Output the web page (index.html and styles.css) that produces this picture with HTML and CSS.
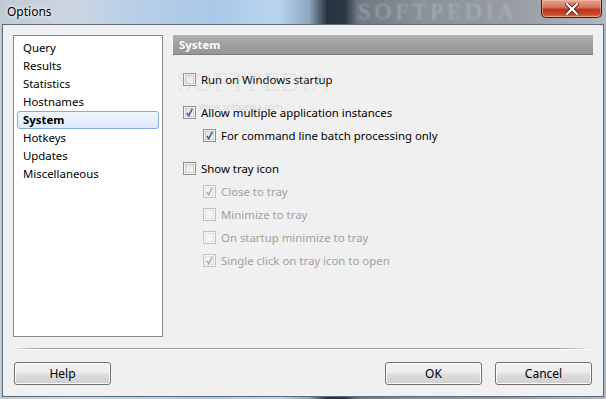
FILE: index.html
```html
<!DOCTYPE html>
<html>
<head>
<meta charset="utf-8">
<title>Options</title>
<link rel="stylesheet" href="styles.css">
</head>
<body>
<div class="window">
  <div class="titlebar">
    <span class="title">Options</span>
    <span class="brand">SOFTPEDIA</span>
    <button class="close" aria-label="Close">
      <svg width="14" height="12" viewBox="0 0 14 12"><path d="M2 1 L12 11 M12 1 L2 11" stroke="#5a1a10" stroke-width="4" stroke-linecap="square"/><path d="M2 1 L12 11 M12 1 L2 11" stroke="#fff" stroke-width="2.2" stroke-linecap="square"/></svg>
    </button>
  </div>
  <div class="client">
    <div class="main">
      <ul class="nav">
        <li class="nav-item">Query</li>
        <li class="nav-item">Results</li>
        <li class="nav-item">Statistics</li>
        <li class="nav-item">Hostnames</li>
        <li class="nav-item selected">System</li>
        <li class="nav-item">Hotkeys</li>
        <li class="nav-item">Updates</li>
        <li class="nav-item">Miscellaneous</li>
      </ul>
      <div class="panel">
        <div class="panel-head">System</div>
        <div class="group first">
          <label class="opt"><span class="cb"></span>Run on Windows startup</label>
        </div>
        <div class="group">
          <label class="opt"><span class="cb checked"></span>Allow multiple application instances</label>
          <label class="opt sub"><span class="cb checked"></span>For command line batch processing only</label>
        </div>
        <div class="group">
          <label class="opt"><span class="cb"></span>Show tray icon</label>
          <label class="opt sub disabled"><span class="cb checked"></span>Close to tray</label>
          <label class="opt sub disabled"><span class="cb"></span>Minimize to tray</label>
          <label class="opt sub disabled"><span class="cb"></span>On startup minimize to tray</label>
          <label class="opt sub disabled"><span class="cb checked"></span>Single click on tray icon to open</label>
        </div>
        <div class="watermark"><span class="wm-big">SOFTPEDIA</span><span class="wm-small">www.softpedia.com</span></div>
      </div>
    </div>
    <div class="sep"></div>
    <div class="buttons">
      <button class="btn">Help</button>
      <div class="spacer"></div>
      <button class="btn">OK</button>
      <button class="btn">Cancel</button>
    </div>
  </div>
</div>
</body>
</html>
```

FILE: styles.css
```css
* { box-sizing: border-box; }
html, body { margin: 0; padding: 0; }
body {
  width: 606px;
  height: 399px;
  overflow: hidden;
  font-family: "Noto Sans", "Open Sans", sans-serif;
  font-size: 11.4px;
  color: #000;
  background: linear-gradient(90deg, #bfcad5 0%, #ccd6e0 12%, #b8cfe7 22%, #aac8e8 35%, #bad5ef 46%, #8ea8bf 51%, #28333f 54%, #2b3744 57%, #6e7983 59%, #8a9198 70%, #979da3 85%, #b0b8c0 100%);
}
.window {
  width: 606px;
  height: 399px;
  display: flex;
  flex-direction: column;
  padding: 0 2px 2px 2px;
}
.titlebar {
  height: 24px;
  display: flex;
  align-items: flex-start;
  position: relative;
  flex: none;
}
.title {
  padding-left: 5px;
  padding-top: 3px;
  font-size: 12px;
  color: #000;
  text-shadow: 0 0 6px rgba(255,255,255,0.9), 0 0 3px rgba(255,255,255,0.9);
}
.brand {
  position: absolute;
  left: 356px;
  top: 0;
  font-family: "Liberation Serif", serif;
  font-size: 23px;
  line-height: 24px;
  letter-spacing: 4px;
  color: rgba(190,196,202,0.55);
  filter: blur(1px);
}
.close {
  position: absolute;
  right: 2px;
  top: 0;
  width: 61px;
  height: 18px;
  border: 1px solid #4a1a12;
  border-top: none;
  border-radius: 0 0 5px 5px;
  background: linear-gradient(180deg, #e8a493 0%, #d46f57 45%, #b8361c 55%, #c94a2c 85%, #e07a50 100%);
  box-shadow: inset 0 0 0 1px rgba(255,200,180,0.5);
  display: flex;
  align-items: center;
  justify-content: center;
  padding: 0;
}
.client {
  flex: 1;
  background: #f0f0f0;
  border: 1px solid #5f6a74;
  display: flex;
  flex-direction: column;
  padding: 10px 10px 11px 10px;
}
.main {
  display: flex;
  gap: 10px;
  height: 302px;
  flex: none;
}
.nav {
  list-style: none;
  margin: 0;
  width: 150px;
  background: #fff;
  border: 1px solid #828790;
  padding: 3px 3px;
  flex: none;
}
.nav-item {
  height: 18px;
  line-height: 16px;
  padding-left: 5px;
  border: 1px solid transparent;
  color: #000;
}
.nav-item.selected {
  font-weight: bold;
  border-color: #84acdd;
  border-radius: 3px;
  background: linear-gradient(180deg, #f1f7fe 0%, #dceafc 100%);
}
.panel {
  flex: 1;
  position: relative;
}
.panel-head {
  height: 20px;
  background: linear-gradient(180deg, #b2b2b2 0%, #9f9f9f 50%, #969696 100%);
  border-bottom: 1px solid #7d7d7d;
  color: #fff;
  font-weight: bold;
  padding-left: 6px;
  line-height: 19px;
}
.group {
  display: flex;
  flex-direction: column;
  margin-top: 10px;
  padding-left: 10px;
}
.group.first { margin-top: 13px; }
.opt {
  height: 23px;
  display: flex;
  align-items: center;
  gap: 5px;
}
.opt.sub { padding-left: 20px; }
.opt.disabled { color: #a0a0a0; }
.cb {
  width: 13px;
  height: 13px;
  border: 1px solid #8e8f8f;
  background: linear-gradient(135deg, #dcdcdc 0%, #f0f0f0 60%, #fbfbfb 100%);
  box-shadow: inset 0 0 0 1px #f4f4f4, inset 0 0 0 2px #cdcdcd;
  flex: none;
  position: relative;
}
.cb.checked::after {
  content: "";
  position: absolute;
  left: 2px;
  top: 1px;
  width: 7px;
  height: 9px;
  background: no-repeat center / 7px 9px url("data:image/svg+xml;utf8,<svg xmlns='http://www.w3.org/2000/svg' width='7' height='9' viewBox='0 0 7 9'><path d='M0.8 5 L2.8 7.6 L6.3 0.8' fill='none' stroke='%234a5e96' stroke-width='1.7'/></svg>");
}
.disabled .cb {
  border-color: #c2c2c2;
  background: #f4f4f4;
  box-shadow: inset 0 0 0 1px #f4f4f4, inset 0 0 0 2px #e2e2e2;
}
.disabled .cb.checked::after {
  background: no-repeat center / 7px 9px url("data:image/svg+xml;utf8,<svg xmlns='http://www.w3.org/2000/svg' width='7' height='9' viewBox='0 0 7 9'><path d='M0.8 5 L2.8 7.6 L6.3 0.8' fill='none' stroke='%23a8a8a8' stroke-width='1.4'/></svg>");
}
.watermark {
  position: absolute;
  left: 4px;
  top: 34px;
  pointer-events: none;
}
.wm-big {
  display: block;
  font-family: "Liberation Serif", serif;
  font-size: 27px;
  line-height: 26px;
  letter-spacing: 1px;
  color: rgba(200,200,200,0.3);
}
.wm-small {
  display: block;
  margin-left: 22px;
  margin-top: 7px;
  font-size: 9px;
  line-height: 10px;
  color: rgba(180,180,180,0.45);
}
.sep {
  height: 2px;
  margin-top: 11px;
  background: linear-gradient(90deg, rgba(160,160,160,0) 0%, #a0a0a0 4%, #a0a0a0 94%, rgba(160,160,160,0) 100%);
  border-bottom: 1px solid #fff;
  flex: none;
}
.buttons {
  display: flex;
  margin-top: 12px;
  padding: 0 1px;
  gap: 13px;
}
.spacer { flex: 1; }
.btn {
  width: 97px;
  height: 23px;
  border: 1px solid #707070;
  border-radius: 3px;
  background: linear-gradient(180deg, #f2f2f2 0%, #ebebeb 48%, #dddddd 52%, #cfcfcf 100%);
  box-shadow: inset 0 0 0 1px #fcfcfc;
  font-family: inherit;
  font-size: 12px;
  color: #000;
  padding: 0;
}
```
